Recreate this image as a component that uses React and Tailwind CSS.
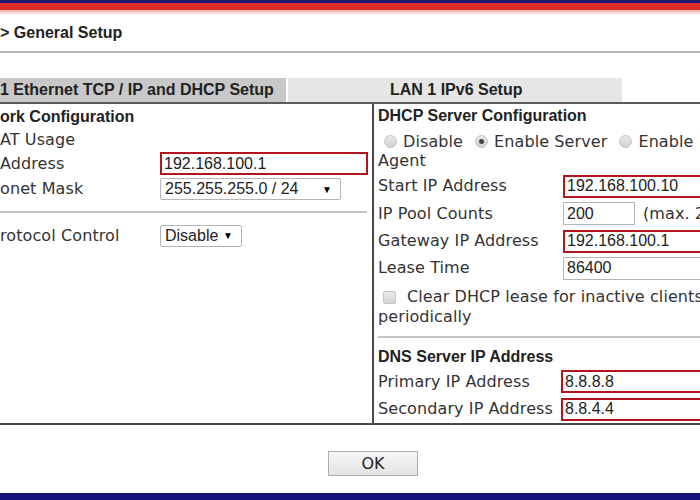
import React from "react";

const label = "font-['DejaVu_Sans',sans-serif] text-[16px] tracking-[0.1px] text-[#333]";
const value = "font-['Liberation_Sans',Arial,sans-serif] text-[16px] text-[#222]";
const heading = "font-['Liberation_Sans',Arial,sans-serif] font-bold text-[16px] text-[#222] whitespace-nowrap";

function TextBox({ text, red, className }) {
  return (
    <div
      className={`h-[23px] flex items-center px-[2px] bg-white ${value} ${
        red ? "border-2 border-[#b3151d]" : "border border-[#b4b4b4] pl-[3px]"
      } ${className}`}
    >
      {text}
    </div>
  );
}

function Select({ text, className }) {
  return (
    <div
      className={`h-[22px] flex items-center justify-between pl-[4px] pr-[8px] bg-white border border-[#b4b4b4] rounded-[2px] ${value} ${className}`}
    >
      <span>{text}</span>
      <span className="text-[10px] text-black">▼</span>
    </div>
  );
}

function Radio({ checked }) {
  return (
    <span className="inline-flex shrink-0 w-[13px] h-[13px] rounded-full border border-[#c4c4c4] bg-gradient-to-b from-[#e8e8e8] to-[#cfcfcf] items-center justify-center">
      {checked && <span className="w-[5px] h-[5px] rounded-full bg-[#444]" />}
    </span>
  );
}

function Row({ name, h, children, lw = "w-[185px]", className = "" }) {
  return (
    <div className={`flex items-center ${h} ${className}`}>
      <div className={`${lw} shrink-0 ${label} whitespace-nowrap`}>{name}</div>
      {children}
    </div>
  );
}

export default function App() {
  return (
    <div className="w-[700px] h-[500px] overflow-hidden bg-white flex flex-col">
      <div className="h-[3px] bg-[#1c1a72]" />
      <div className="h-[7px] bg-[#db2e29]" />
      <div className="h-[5px] bg-gradient-to-b from-[#eba8a4] to-white" />

      <div className={`h-[38px] flex items-center border-b-2 border-[#b9b9b9] ${heading}`}>
        &gt; General Setup
      </div>

      <div className={`mt-[25px] h-[24px] flex gap-[2px] ${heading}`}>
        <div className="w-[286px] bg-[#c8c8c8] flex items-center">
          1 Ethernet TCP / IP and DHCP Setup
        </div>
        <div className="w-[334px] bg-[#e6e6e6] flex items-center pl-[102px]">
          LAN 1 IPv6 Setup
        </div>
      </div>
      <div className="h-[2px] bg-[#5c5c5c]" />

      <div className="h-[321px] flex border-b-2 border-[#4a4a4a]">
        <div className="w-[372px] shrink-0 flex flex-col">
          <div className={`h-[25px] flex items-center ${heading}`}>ork Configuration</div>
          <div className={`h-[22px] flex items-center ${label}`}>AT Usage</div>
          <Row name="Address" h="h-[25px]" lw="w-[160px]">
            <TextBox text="192.168.100.1" red className="w-[208px]" />
          </Row>
          <Row name="onet Mask" h="h-[26px]" lw="w-[160px]">
            <Select text="255.255.255.0 / 24" className="w-[181px]" />
          </Row>
          <div className="mt-[9px] h-[2px] w-[367px] bg-[#c4c4c4]" />
          <Row name="rotocol Control" h="h-[23px]" lw="w-[160px]" className="mt-[11px]">
            <Select text="Disable" className="w-[82px]" />
          </Row>
        </div>

        <div className="flex-1 border-l-2 border-[#4a4a4a] pl-[4px] flex flex-col min-w-0">
          <div className={`h-[25px] flex items-center ${heading}`}>DHCP Server Configuration</div>
          <div className={`mt-[3px] h-[20px] flex items-center whitespace-nowrap ${label}`}>
            <span className="ml-[6px] mr-[6px] flex shrink-0"><Radio /></span>
            Disable
            <span className="ml-[12px] mr-[6px] flex shrink-0"><Radio checked /></span>
            Enable Server
            <span className="ml-[12px] mr-[6px] flex shrink-0"><Radio /></span>
            Enable Relay
          </div>
          <div className={`h-[18px] flex items-center ${label}`}>Agent</div>
          <div className="h-[3px]" />
          <Row name="Start IP Address" h="h-[27px]">
            <TextBox text="192.168.100.10" red className="w-[180px] shrink-0" />
          </Row>
          <Row name="IP Pool Counts" h="h-[28px]">
            <TextBox text="200" className="w-[72px] shrink-0" />
            <span className={`ml-[8px] whitespace-nowrap ${label}`}>(max. 253)</span>
          </Row>
          <Row name="Gateway IP Address" h="h-[27px]">
            <TextBox text="192.168.100.1" red className="w-[180px] shrink-0" />
          </Row>
          <Row name="Lease Time" h="h-[28px]">
            <TextBox text="86400" className="w-[180px] shrink-0" />
          </Row>
          <div className={`mt-[5px] h-[20px] flex items-center whitespace-nowrap ${label}`}>
            <span className="shrink-0 ml-[5px] mr-[11px] w-[13px] h-[13px] rounded-[2px] border border-[#c4c4c4] bg-gradient-to-b from-[#ececec] to-[#d2d2d2]" />
            Clear DHCP lease for inactive clients
          </div>
          <div className={`h-[20px] flex items-center ${label}`}>periodically</div>
          <div className="mt-[9px] h-[2px] bg-[#c4c4c4]" />
          <div className={`mt-[8px] h-[22px] flex items-center ${heading}`}>DNS Server IP Address</div>
          <Row name="Primary IP Address" h="h-[27px]" lw="w-[183px]">
            <TextBox text="8.8.8.8" red className="w-[180px] shrink-0" />
          </Row>
          <Row name="Secondary IP Address" h="h-[28px]" lw="w-[183px]">
            <TextBox text="8.8.4.4" red className="w-[180px] shrink-0" />
          </Row>
        </div>
      </div>

      <div className="mt-[26px] ml-[328px] w-[90px] h-[25px] border border-[#adadad] bg-gradient-to-b from-[#f6f6f6] to-[#e4e4e4] flex items-center justify-center font-['DejaVu_Sans',sans-serif] text-[16px] text-[#222]">
        OK
      </div>

      <div className="mt-[17px] h-[7px] bg-[#14127c]" />
    </div>
  );
}
